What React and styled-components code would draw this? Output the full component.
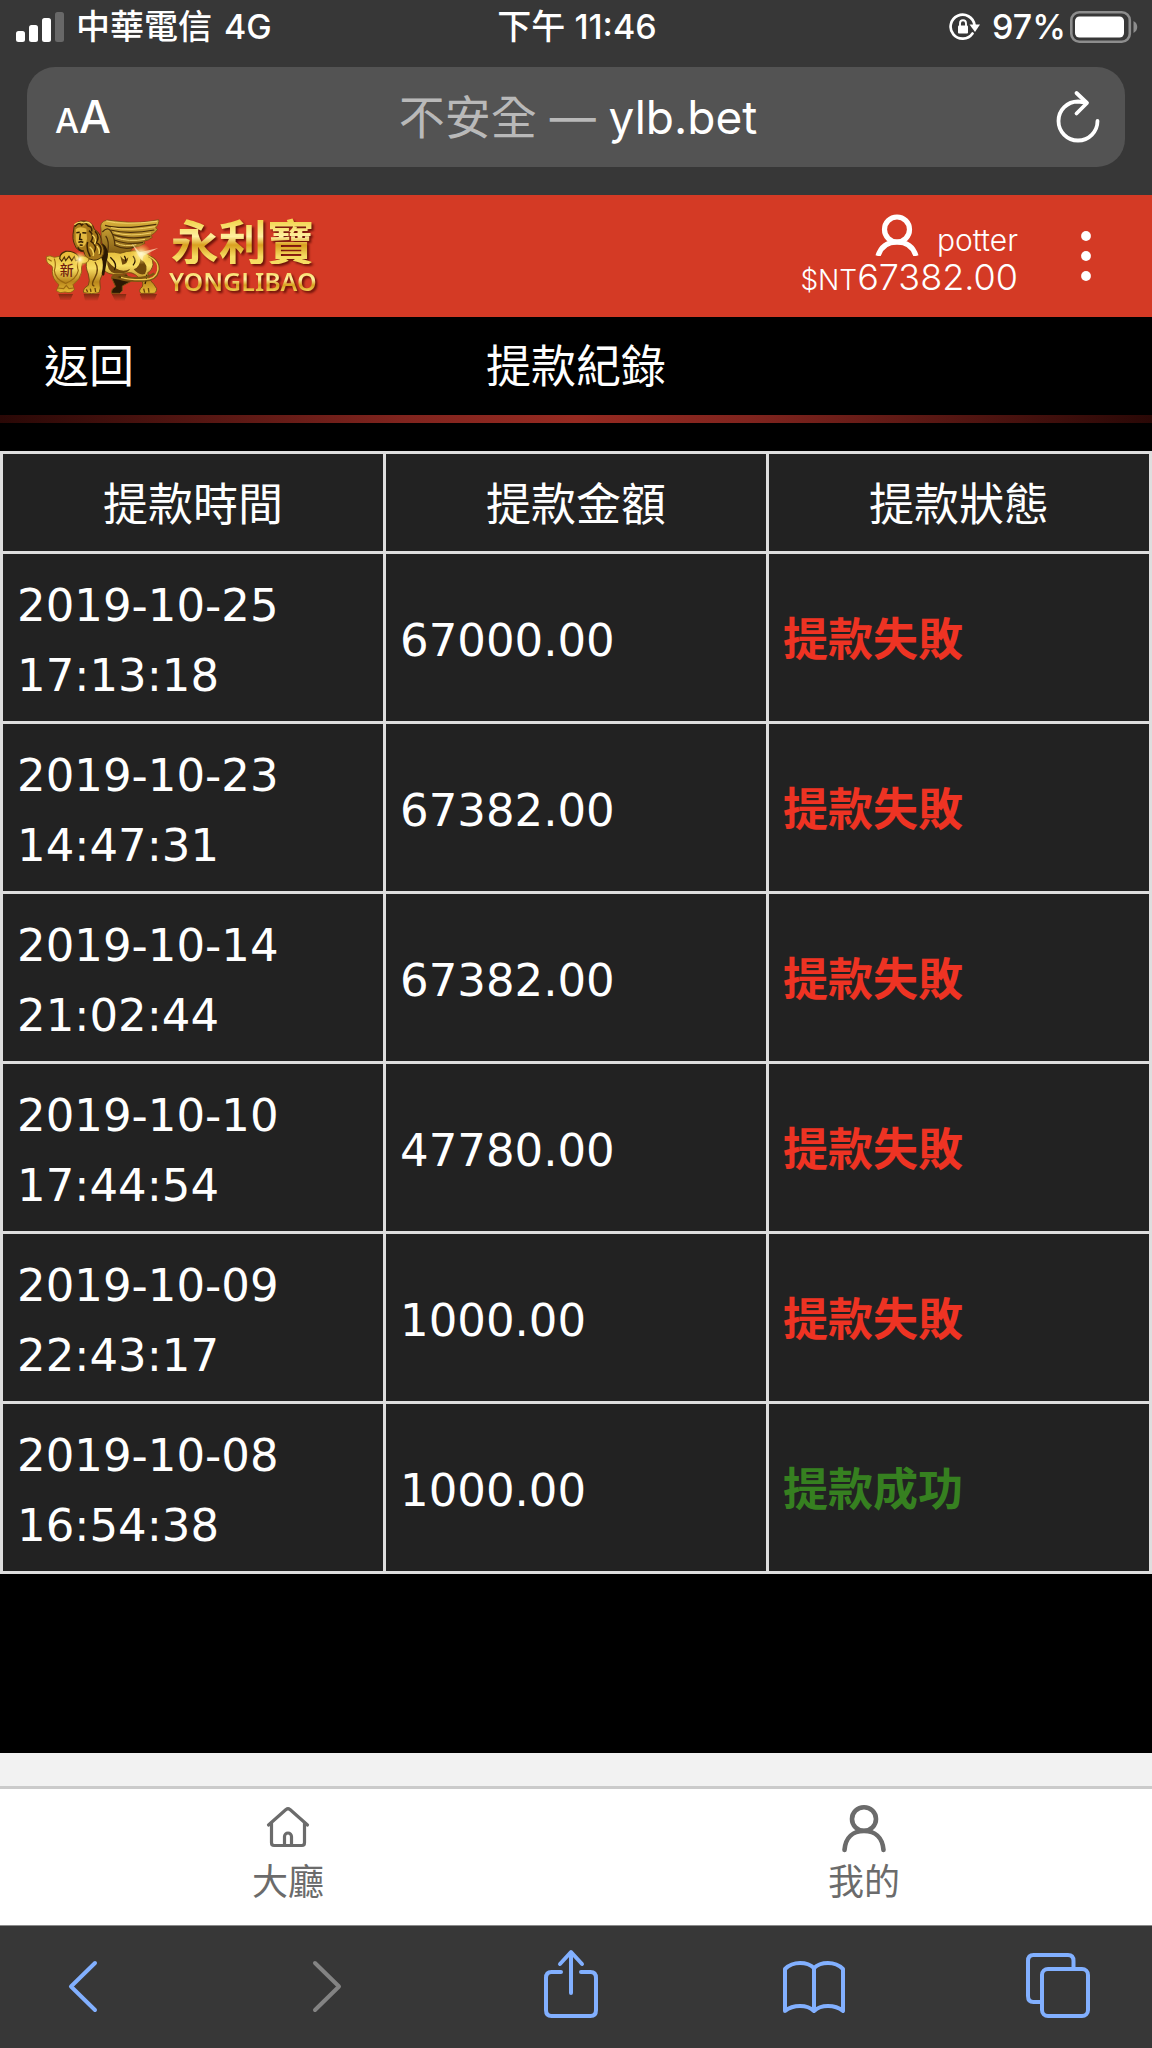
import React from "react";
import styled, { createGlobalStyle } from "styled-components";

const ui = `Inter, "Noto Sans CJK TC", sans-serif`;
const tableFont = `"DejaVu Sans", "Noto Sans CJK TC", sans-serif`;

const GlobalStyle = createGlobalStyle`
  *, *::before, *::after { box-sizing: border-box; }
  body { margin: 0; background: #000; font-family: ${ui}; color: #fff; }
  button { font: inherit; color: inherit; background: none; border: 0; padding: 0; cursor: pointer; }
  a { color: inherit; text-decoration: none; }
  svg { display: block; flex: none; }
`;

const Page = styled.div`
  display: flex;
  flex-direction: column;
  min-height: 100vh;
`;

const BrowserTop = styled.header`
  background: #373737;
  padding-bottom: 28px;
`;

const StatusBar = styled.div`
  display: grid;
  grid-template-columns: 1fr auto 1fr;
  align-items: center;
  padding: 0 14px 13px 16px;
  font-size: 34px;
  line-height: 54px;
  font-weight: 500;
`;

const StatusGroup = styled.div`
  display: flex;
  align-items: center;
  gap: ${(p) => p.$gap}px;
  justify-content: ${(p) => (p.$end ? "flex-end" : "flex-start")};
`;

const AddressBar = styled.div`
  display: grid;
  grid-template-columns: 1fr auto 1fr;
  align-items: center;
  min-height: 100px;
  margin: 0 27px;
  padding: 0 24px 0 28px;
  border-radius: 28px;
  background: #535353;
`;

const TextSize = styled.button`
  justify-self: start;
  display: flex;
  align-items: baseline;
  padding-top: 4px;
  font-size: 45px;
  line-height: 60px;
  font-weight: 500;
`;

const SmallA = styled.span`
  font-size: 34px;
`;

const Address = styled.button`
  font-size: 46px;
  line-height: 60px;
  white-space: pre;
`;

const Insecure = styled.span`
  color: #b9b9b9;
`;

const Reload = styled.button`
  justify-self: end;
`;

const SiteHeader = styled.div`
  display: flex;
  align-items: center;
  justify-content: space-between;
  min-height: 122px;
  padding: 0 56px 0 39px;
  background: #d43a25;
`;

const Logo = styled.a`
  display: flex;
  align-items: center;
`;

const LogoWords = styled.span`
  display: flex;
  flex-direction: column;
  align-items: center;
  filter: drop-shadow(2px 2px 1px #6b1208);
`;

const GoldText = styled.span`
  font-family: ${(p) => (p.$latin ? `"Noto Sans", sans-serif` : `"Noto Sans CJK TC", sans-serif`)};
  font-size: ${(p) => (p.$latin ? 25 : 48)}px;
  line-height: ${(p) => (p.$latin ? 34 : 50)}px;
  font-weight: ${(p) => (p.$latin ? 600 : 700)};
  color: transparent;
  background: linear-gradient(#f3d653 15%, #fff0a0 45%, #d9a01f 62%, #f6dc62 85%);
  -webkit-background-clip: text;
  background-clip: text;
`;

const Account = styled.div`
  display: flex;
  align-items: center;
  gap: 58px;
`;

const AccountInfo = styled.div`
  display: flex;
  flex-direction: column;
  align-items: flex-end;
  padding-top: 3px;
  font-weight: 300;
`;

const UserLine = styled.span`
  display: flex;
  align-items: flex-end;
  gap: 18px;
  font-size: 30px;
  line-height: 32px;
`;

const Balance = styled.span`
  font-size: 36px;
  line-height: 42px;
`;

const Currency = styled.span`
  font-size: 28px;
`;

const TitleBar = styled.div`
  display: grid;
  grid-template-columns: 1fr auto 1fr;
  align-items: center;
  padding: 4px 44px 0;
  font-family: ${tableFont};
  font-size: 45px;
  line-height: 94px;
`;

const Back = styled.button`
  justify-self: start;
`;

const Title = styled.h1`
  margin: 0;
  font: inherit;
`;

const Divider = styled.div`
  height: 8px;
  margin-bottom: 28px;
  background: linear-gradient(90deg, #2a0806, #80241e 35%, #962a21 50%, #80241e 65%, #2a0806);
`;

const Main = styled.main`
  flex: 1;
`;

const Records = styled.table`
  width: 100%;
  table-layout: fixed;
  border-collapse: collapse;
  background: #222;
  font-family: ${tableFont};
  font-size: 45px;
  line-height: 70px;
`;

const HeadCell = styled.th`
  border: 3px solid #dedede;
  padding: 17px 12px 10px;
  font-weight: 400;
`;

const Cell = styled.td`
  border: 3px solid #dedede;
  padding: 17px 14px 10px;
`;

const Status = styled.strong`
  color: ${(p) => (p.$ok ? "#368020" : "#ee3323")};
  font-weight: 700;
`;

const TabBar = styled.nav`
  display: grid;
  grid-template-columns: 1fr 1fr;
  border-top: 3px solid #cbcbcb;
  background: #fff;
`;

const TabStrip = styled.div`
  padding-top: 33px;
  background: #f2f2f2;
`;

const Tab = styled.a`
  display: flex;
  flex-direction: column;
  align-items: center;
  padding: 14px 0;
  color: #6b6b6b;
  font-size: 36px;
  line-height: 58px;
`;

const Toolbar = styled.nav`
  display: flex;
  justify-content: space-between;
  padding: 21px 61px 29px 50px;
  border-top: 1px solid #8a8a8a;
  background: #373737;
`;

const Tool = styled.button`
  color: #82b0ff;
  &:disabled { color: #838383; cursor: default; }
`;

const rows = [
  ["2019-10-25", "17:13:18", "67000.00", false],
  ["2019-10-23", "14:47:31", "67382.00", false],
  ["2019-10-14", "21:02:44", "67382.00", false],
  ["2019-10-10", "17:44:54", "47780.00", false],
  ["2019-10-09", "22:43:17", "1000.00", false],
  ["2019-10-08", "16:54:38", "1000.00", true],
];

const Signal = () => (
  <svg width="48" height="30" viewBox="0 0 48 30" fill="#fff" aria-hidden="true">
    <rect x="0" y="19" width="9" height="11" rx="2.5" />
    <rect x="13" y="13" width="9" height="17" rx="2.5" />
    <rect x="26" y="6" width="9" height="24" rx="2.5" />
    <rect x="39" y="0" width="9" height="30" rx="2.5" fill="#686868" />
  </svg>
);

const RotationLock = () => (
  <svg width="31" height="28" viewBox="0 0 31 28" aria-hidden="true">
    <path d="M23.5 20.5A12 12 0 1 1 25.5 12" fill="none" stroke="#fff" strokeWidth="2.7" strokeLinecap="round" />
    <path d="M20.5 11.5H31L26 19Z" fill="#fff" />
    <rect x="9" y="12.5" width="10" height="8" rx="1" fill="#fff" />
    <path d="M11 13V10.5a3 3.2 0 0 1 6 0V13" fill="none" stroke="#fff" strokeWidth="1.9" />
  </svg>
);

const Battery = () => (
  <svg width="68" height="32" viewBox="0 0 68 32" aria-hidden="true">
    <rect x="1.3" y="1.3" width="58.5" height="29.4" rx="8" fill="none" stroke="#8d8d8d" strokeWidth="2.6" />
    <rect x="5" y="5.5" width="49" height="21" rx="4.5" fill="#fff" />
    <path d="M63.5 10c5 2.5 5 9.500 0 12Z" fill="#8d8d8d" />
  </svg>
);

const ReloadIcon = () => (
  <svg width="46" height="54" viewBox="0 0 46 54" fill="none" stroke="#fff" strokeWidth="3.8" strokeLinecap="round" strokeLinejoin="round" aria-hidden="true">
    <path d="M42.500 31A19.500 19.500 0 1 1 23 11.500L31 12.500" />
    <path d="M21.500 3L32 13L21.500 23.500" />
  </svg>
);

const HeaderUser = () => (
  <svg width="44" height="42" viewBox="0 0 44 42" fill="none" stroke="#fff" strokeWidth="5.200" aria-hidden="true">
    <ellipse cx="22" cy="15.500" rx="12.500" ry="12.500" />
    <path d="M3 42C6 32 13 28 22 28S38 32 41 42" />
  </svg>
);

const Dots = () => (
  <svg width="20" height="50" viewBox="0 0 20 50" fill="#fff" aria-hidden="true">
    <circle cx="10" cy="5" r="4.900" />
    <circle cx="10" cy="25" r="4.900" />
    <circle cx="10" cy="45" r="4.900" />
  </svg>
);

const HomeIcon = () => (
  <svg width="50" height="50" viewBox="0 0 50 50" fill="none" stroke="#6b6b6b" strokeWidth="3.200" strokeLinecap="round" strokeLinejoin="round" aria-hidden="true">
    <path d="M5.500 22L23 6.500Q25 5 27 6.500L44.500 22" />
    <path d="M8.500 20V39.500Q8.500 42.500 11 42.500H39Q41.500 42.500 41.500 39.500V20" />
    <path d="M21.500 42V33.500a3.500 3.500 0 0 1 7 0V42" />
  </svg>
);

const MineIcon = () => (
  <svg width="50" height="50" viewBox="0 0 50 50" fill="none" stroke="#6b6b6b" strokeWidth="4.600" strokeLinecap="round" aria-hidden="true">
    <ellipse cx="25" cy="16" rx="12" ry="11.800" />
    <path d="M5.500 47C6.500 34 14.500 28 25 28S43.500 34 44.500 47" />
  </svg>
);

const ToolIcon = ({ children }) => (
  <svg width="66" height="72" viewBox="0 0 66 72" fill="none" stroke="currentColor" strokeWidth="4" strokeLinecap="round" strokeLinejoin="round" aria-hidden="true">
    {children}
  </svg>
);

const WingedLion = () => (
  <svg width="130" height="100" viewBox="0 0 390 300" aria-hidden="true">
    <defs>
      <linearGradient id="gold" x1="0" y1="0" x2="0" y2="1">
        <stop offset="0" stopColor="#e6bd3a" />
        <stop offset=".35" stopColor="#f7dd62" />
        <stop offset=".7" stopColor="#b9861b" />
        <stop offset="1" stopColor="#e8bd36" />
      </linearGradient>
      <linearGradient id="wing" x1="0" y1="0" x2="0" y2="1">
        <stop offset="0" stopColor="#dcb43c" />
        <stop offset="1" stopColor="#7d5511" />
      </linearGradient>
      <radialGradient id="glow">
        <stop offset="0" stopColor="#fffbe0" />
        <stop offset=".4" stopColor="#ffe98a" stopOpacity=".7" />
        <stop offset="1" stopColor="#ffd84a" stopOpacity="0" />
      </radialGradient>
      <linearGradient id="mirror" x1="0" y1="0" x2="0" y2="1">
        <stop offset="0" stopColor="#5d2208" stopOpacity=".7" />
        <stop offset="1" stopColor="#5d2208" stopOpacity="0" />
      </linearGradient>
    </defs>
    <path d="M58 264h44l-8 18H64ZM134 264h48l-6 20h-38ZM218 264h44l-5 22h-28ZM302 264h52l-8 18h-36Z" fill="url(#mirror)" />
    <path d="M218 216l44-12 14 22-26 14v14l-8 8h-24q-2-14 12-20Z" fill="#2c1803" stroke="#7a5312" strokeWidth="3" />
    <path d="M186 70Q180 48 204 42L240 46Q300 54 359 41Q362 50 350 66L356 70Q346 84 336 88L340 94Q328 104 314 106L318 112Q300 124 282 124L262 150L206 146Q186 130 186 70Z" fill="url(#wing)" stroke="#6e4a0f" strokeWidth="2" />
    <g fill="none" stroke="#4d300a" strokeWidth="3.500">
      <path d="M198 58Q250 72 352 55M214 72Q270 86 346 72M222 86Q270 102 334 91M226 102Q266 118 312 109M226 118Q254 132 284 124" />
      <path d="M190 78Q206 60 216 76T228 118M200 90Q212 104 206 140" />
    </g>
    <path d="M202 45Q250 58 354 46M216 65Q276 76 348 62M226 80Q276 93 336 81M230 95Q270 109 318 100M230 111Q258 124 292 116" fill="none" stroke="#f0d067" strokeWidth="3" />
    <path d="M184 148Q206 132 244 142Q282 128 318 140Q342 150 342 176Q338 194 326 200Q326 220 344 234L353 248Q352 262 342 262H306Q296 254 310 242Q316 226 298 214Q280 194 258 202Q220 212 198 196Z" fill="url(#gold)" stroke="#6e4a0f" strokeWidth="2.500" />
    <path d="M204 162Q240 208 274 188Q264 206 226 202Q204 196 204 162ZM304 158Q332 176 318 204Q300 210 284 190Q304 182 304 158ZM244 150q12 18 24 4q-2 22-18 22Z" fill="#70480c" />
    <path d="M214 154Q238 176 226 192M282 150Q294 164 282 178M256 150Q262 158 260 166M323 206Q324 220 318 234" fill="none" stroke="#2c1803" strokeWidth="4" />
    <path d="M328 150Q364 164 358 196Q352 222 316 224Q264 226 242 218L220 214Q222 206 244 208L276 216Q326 218 346 202" fill="none" stroke="#7d5511" strokeWidth="7" />
    <path d="M328 150Q362 166 356 194Q350 220 316 221Q270 222 246 214" fill="none" stroke="#eec64b" strokeWidth="4" />
    <path d="M144 156Q164 140 192 150Q204 168 190 204Q178 224 184 246L180 260Q160 266 134 260Q130 248 148 238Q154 226 148 204Q138 184 144 156Z" fill="url(#gold)" stroke="#6e4a0f" strokeWidth="2.500" />
    <path d="M168 168Q182 190 168 214T166 240M142 250l4 8M154 248l2 10M168 246l2 12M314 248l3 12M328 246l2 14" fill="none" stroke="#6b430a" strokeWidth="4" />
    <path d="M190 112Q214 130 204 162L196 206Q190 214 188 202Q196 172 186 152Z" fill="#2c1803" />
    <path d="M104 72Q104 50 126 45Q160 42 166 70Q190 84 186 112Q202 132 190 152Q170 168 156 160Q140 160 134 136Q114 136 108 118Q98 100 104 72Z" fill="#a7781a" stroke="#4d300a" strokeWidth="3" />
    <path d="M110 70Q122 58 142 68L144 98Q142 120 126 124Q112 120 110 100Z" fill="#e3b83f" />
    <path d="M112 80l10-1M130 80l12 1M124 82l-2 18 8 1M118 109q8-4 15 0M122 117l9 1" fill="none" stroke="#2c1803" strokeWidth="4.500" />
    <path d="M108 62q10-16 20-4q10-14 20 2q12 2 10 16M150 74q18 14 6 32q22 14 8 34M168 76q16 16 4 34q22 12 10 36M146 108q-6 20 8 44M116 124q8 14 18 10" fill="none" stroke="#392104" strokeWidth="4.500" />
    <path d="M106 56q14-12 28-5q16-7 24 8M160 86q16 14 6 28M152 122q16 14 10 28M174 120q10 12 6 24" fill="none" stroke="#f3d45b" strokeWidth="4" />
    <path d="M22 152Q32 146 46 154Q82 144 118 154Q134 144 150 158Q148 174 130 172Q126 186 128 198Q124 220 102 236L106 250Q98 264 78 258Q62 264 52 254L60 236Q40 220 40 196Q44 182 36 178Q20 172 22 152Z" fill="url(#gold)" stroke="#8a5d10" strokeWidth="2.500" />
    <path d="M46 158Q52 176 46 194Q48 220 80 232Q112 220 118 194Q112 176 120 158M26 158l12 8M56 246l18 2 8-10 8 10 14-2" fill="none" stroke="#9c6a10" strokeWidth="3.500" />
    <path d="M62 158Q62 142 80 136Q104 134 118 150Q124 162 110 164L106 152L98 164L90 151L80 164L76 153L68 166Z" fill="#e9bf3c" stroke="#4a2d05" strokeWidth="3.500" />
    <text x="83" y="206" textAnchor="middle" fontFamily="Noto Sans CJK TC, sans-serif" fontSize="42" fontWeight="500" fill="#721c0d">新</text>
    <circle cx="122" cy="160" r="24" fill="url(#glow)" />
    <circle cx="306" cy="144" r="32" fill="url(#glow)" />
    <path d="M278 112L302 139L358 126L313 149L310 166L299 149Z" fill="#fff6c9" opacity=".65" />
  </svg>
);

export default function App() {
  return (
    <Page>
      <GlobalStyle />
      <BrowserTop>
        <StatusBar>
          <StatusGroup $gap={12}>
            <Signal />
            <span>中華電信</span>
            <span>4G</span>
          </StatusGroup>
          <span>下午 11:46</span>
          <StatusGroup $gap={12} $end>
            <RotationLock />
            <StatusGroup $gap={4}>
              <span>97%</span>
              <Battery />
            </StatusGroup>
          </StatusGroup>
        </StatusBar>
        <AddressBar>
          <TextSize type="button"><SmallA>A</SmallA>A</TextSize>
          <Address type="button"><Insecure>不安全 — </Insecure>ylb.bet</Address>
          <Reload type="button" aria-label="重新載入"><ReloadIcon /></Reload>
        </AddressBar>
      </BrowserTop>

      <SiteHeader>
        <Logo href="#home">
          <WingedLion />
          <LogoWords>
            <GoldText>永利寶</GoldText>
            <GoldText $latin>YONGLIBAO</GoldText>
          </LogoWords>
        </Logo>
        <Account>
          <AccountInfo>
            <UserLine><HeaderUser />potter</UserLine>
            <Balance><Currency>$NT</Currency>67382.00</Balance>
          </AccountInfo>
          <button type="button" aria-label="選單"><Dots /></button>
        </Account>
      </SiteHeader>

      <Main>
        <TitleBar>
          <Back type="button">返回</Back>
          <Title>提款紀錄</Title>
        </TitleBar>
        <Divider />
        <Records>
          <thead>
            <tr>
              <HeadCell scope="col">提款時間</HeadCell>
              <HeadCell scope="col">提款金額</HeadCell>
              <HeadCell scope="col">提款狀態</HeadCell>
            </tr>
          </thead>
          <tbody>
            {rows.map(([date, time, amount, ok]) => (
              <tr key={date}>
                <Cell>{date}<br />{time}</Cell>
                <Cell>{amount}</Cell>
                <Cell><Status $ok={ok}>{ok ? "提款成功" : "提款失敗"}</Status></Cell>
              </tr>
            ))}
          </tbody>
        </Records>
      </Main>

      <TabStrip>
        <TabBar>
          <Tab href="#lobby"><HomeIcon />大廳</Tab>
          <Tab href="#mine"><MineIcon />我的</Tab>
        </TabBar>
      </TabStrip>

      <Toolbar>
        <Tool type="button" aria-label="上一頁">
          <ToolIcon><path d="M45 16L21 39.500L45 63" /></ToolIcon>
        </Tool>
        <Tool type="button" aria-label="下一頁" disabled>
          <ToolIcon><path d="M21 16L45 39.500L21 63" /></ToolIcon>
        </Tool>
        <Tool type="button" aria-label="分享">
          <ToolIcon>
            <path d="M23 25H13.500Q8 25 8 31V63Q8 69 13.500 69H52.500Q58 69 58 63V31Q58 25 52.500 25H43" />
            <path d="M33 46V6M22 17L33 5L44 17" />
          </ToolIcon>
        </Tool>
        <Tool type="button" aria-label="書籤">
          <ToolIcon>
            <path d="M33 21Q28 16 19 16T4 22V64Q10 59 19 59T33 64Q38 59 47 59T62 64V22Q56 16 47 16T33 21V64" />
          </ToolIcon>
        </Tool>
        <Tool type="button" aria-label="分頁">
          <ToolIcon>
            <rect x="17" y="22" width="46" height="47" rx="6" />
            <path d="M15 55H8.500Q3 55 3 49V14Q3 8 8.500 8H43Q48.500 8 48.500 14V20" />
          </ToolIcon>
        </Tool>
      </Toolbar>
    </Page>
  );
}
